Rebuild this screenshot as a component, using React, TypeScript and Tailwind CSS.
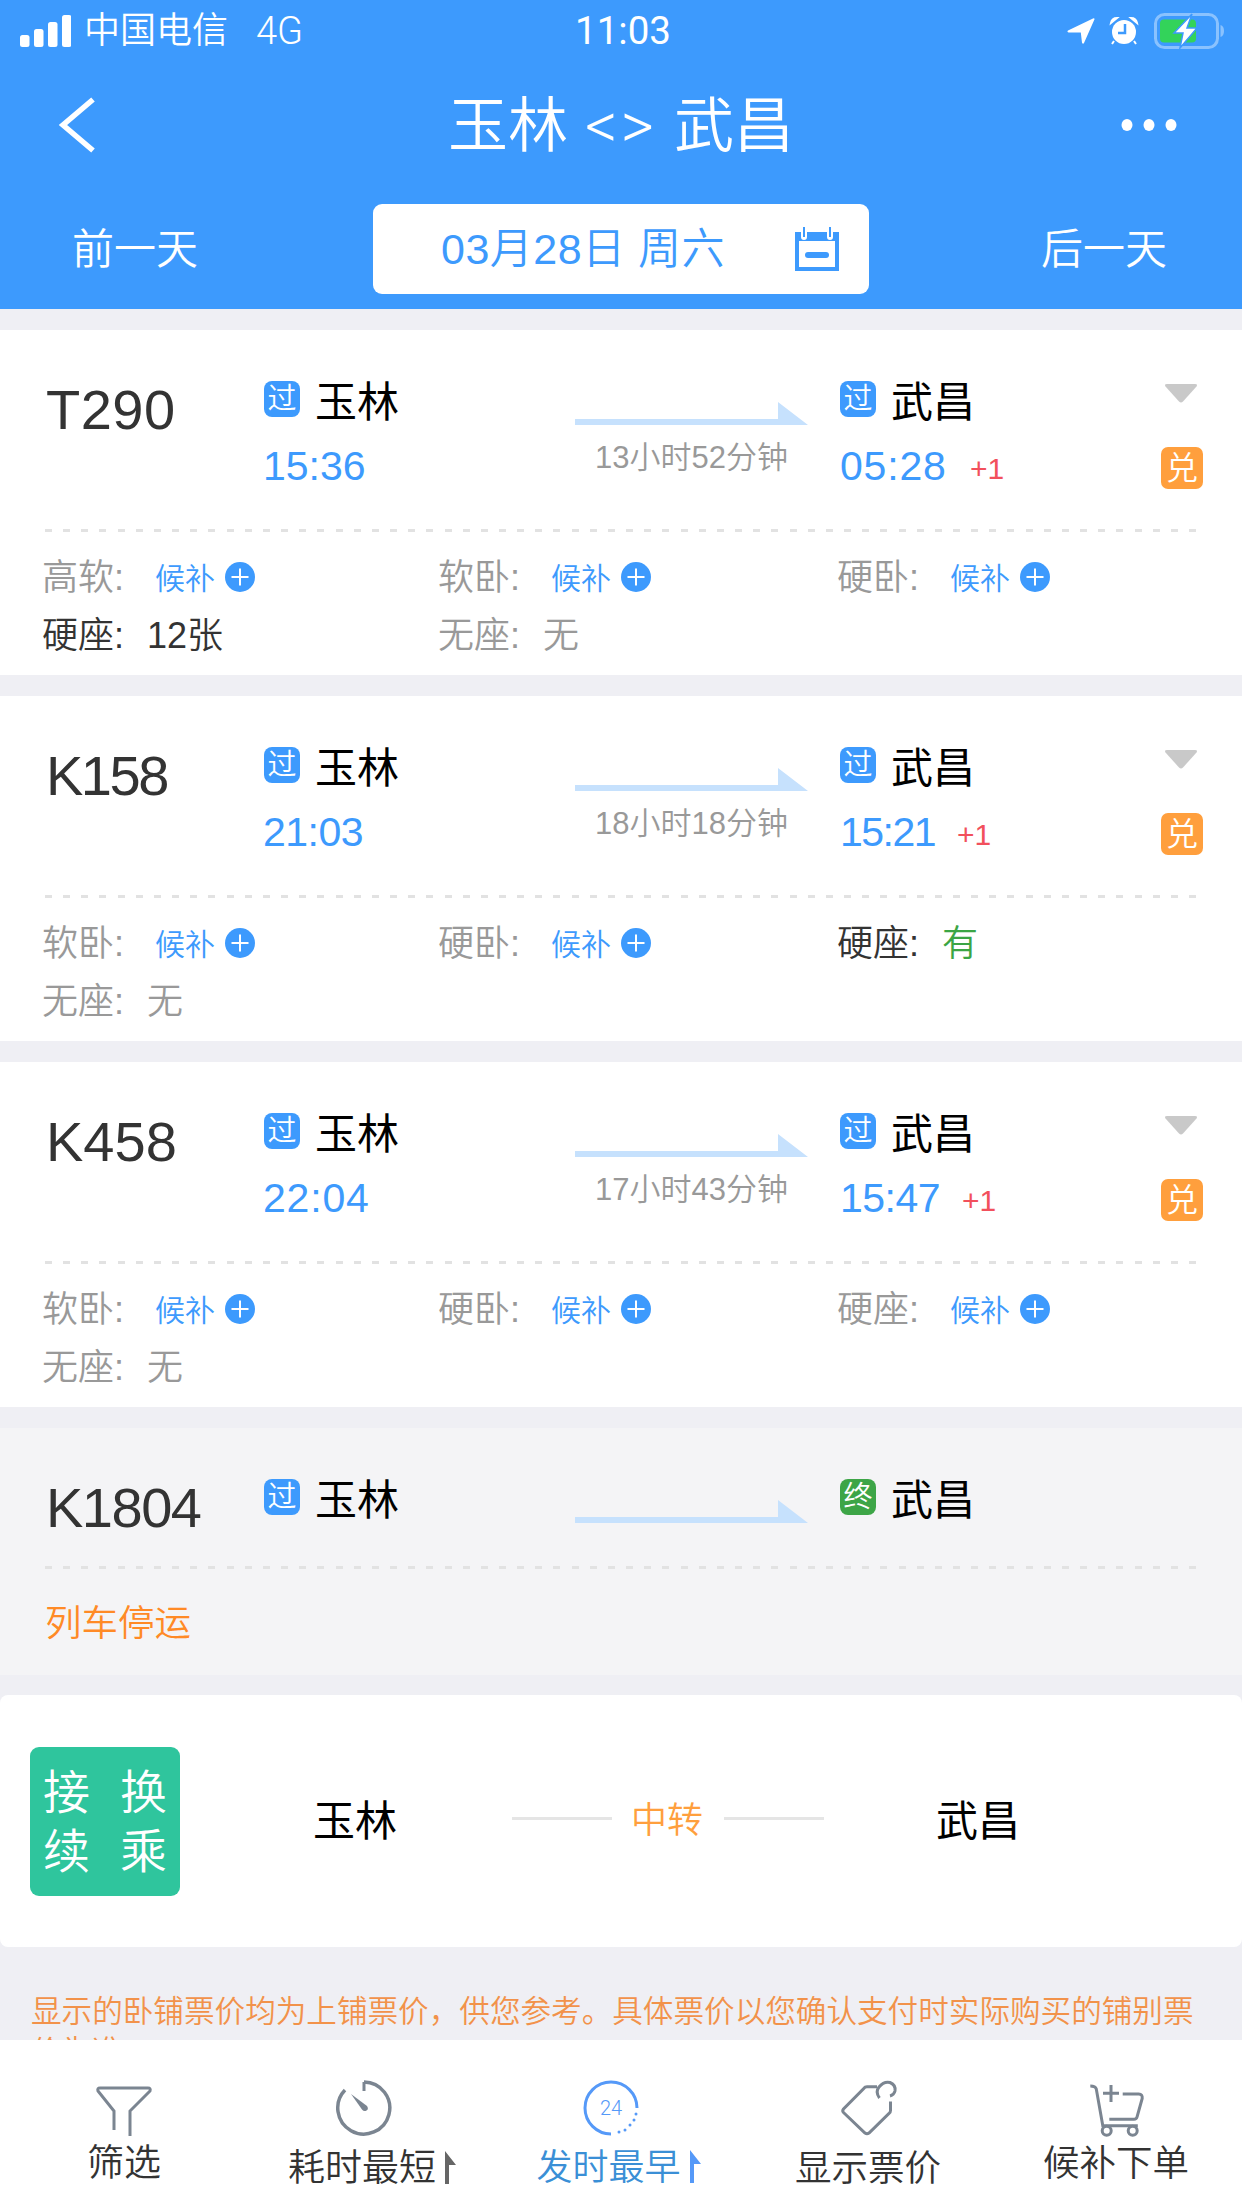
const BLUE = '#3D9AFD'

const trains = [
  {
    no: 'T290', noClass: 'tracking-[0.5px]', from: '过', to: '过', depart: '15:36', departClass: 'tracking-[0px]', arrive: '05:28', arriveClass: 'tracking-[0.8px]', timeBox: 'w-[130px]', dur: '13小时52分钟',
    seats: [
      { label: '高软', wait: true }, { label: '软卧', wait: true }, { label: '硬卧', wait: true },
      { label: '硬座', value: '12张', tone: 'dark' }, { label: '无座', value: '无', tone: 'gray' },
    ],
  },
  {
    no: 'K158', noClass: 'tracking-[-2.500px]', from: '过', to: '过', depart: '21:03', departClass: 'tracking-[-0.5px]', arrive: '15:21', arriveClass: 'tracking-[-1.500px]', timeBox: 'w-[117px]', dur: '18小时18分钟',
    seats: [
      { label: '软卧', wait: true }, { label: '硬卧', wait: true }, { label: '硬座', value: '有', tone: 'green' },
      { label: '无座', value: '无', tone: 'gray' },
    ],
  },
  {
    no: 'K458', noClass: 'tracking-[0px]', from: '过', to: '过', depart: '22:04', departClass: 'tracking-[0.8px]', arrive: '15:47', arriveClass: 'tracking-[-0.5px]', timeBox: 'w-[122px]', dur: '17小时43分钟',
    seats: [
      { label: '软卧', wait: true }, { label: '硬卧', wait: true }, { label: '硬座', wait: true },
      { label: '无座', value: '无', tone: 'gray' },
    ],
  },
]

function StationBadge({ text, green }: { text: string; green?: boolean }) {
  return (
    <span className={`flex h-[36px] w-[36px] shrink-0 items-center justify-center rounded-[8px] text-[29px] leading-none font-[350] text-white ${green ? 'bg-[#3DA547]' : 'bg-[#3D9AFD]'}`}>
      {text}
    </span>
  )
}

function Station({ badge, name, green }: { badge: string; name: string; green?: boolean }) {
  return (
    <div className="flex h-[42px] items-start">
      <StationBadge text={badge} green={green} />
      <span className="mt-[1px] ml-[15px] text-[42px] leading-[42px] text-black">{name}</span>
    </div>
  )
}

function Arrow() {
  return (
    <svg width="233" height="24" viewBox="0 0 233 24" className="block">
      <polygon points="0,17 203,17 203,0 233,23 0,23" fill="#C6E1FD" />
    </svg>
  )
}

function Dashed() {
  return <div className="h-[3px] bg-[repeating-linear-gradient(90deg,#E2E2E2_0,#E2E2E2_7px,transparent_7px,transparent_18.160px)]" />
}

function PlusDot() {
  return (
    <svg width="30" height="30" viewBox="0 0 30 30" className="-mt-[2px] ml-[10px] block">
      <circle cx="15" cy="15" r="15" fill={BLUE} />
      <path d="M15 6.500v17M6.500 15h17" stroke="#fff" strokeWidth="2" />
    </svg>
  )
}

function Seat({ seat }: { seat: { label: string; wait?: boolean; value?: string; tone?: string } }) {
  const dark = seat.tone === 'dark' || seat.tone === 'green'
  return (
    <div className="flex h-[58px] items-center">
      <span className={`w-[105px] text-[36px] font-[350] ${dark ? 'text-[#333333]' : 'text-[#999999]'}`}>{seat.label}:</span>
      {seat.wait ? (
        <>
          <span className="ml-[8px] text-[30px] font-[350] text-[#3D9AFD]">候补</span>
          <PlusDot />
        </>
      ) : (
        <span className={`text-[36px] font-[350] ${seat.tone === 'green' ? 'text-[#3BA544]' : seat.tone === 'gray' ? 'text-[#999999]' : 'text-[#333333]'}`}>
          {seat.value}
        </span>
      )}
    </div>
  )
}

function TrainCard({ train }: { train: (typeof trains)[number] }) {
  return (
    <section className="h-[345px] bg-white">
      <div className="flex h-[199px] pl-[46px]">
        <div className={`w-[218px] pt-[52px] text-[56px] leading-[56px] text-[#333333] ${train.noClass}`}>{train.no}</div>
        <div className="w-[311px] pt-[51px]">
          <Station badge={train.from} name="玉林" />
          <div className={`mt-[19px] -ml-[1px] text-[41px] leading-[48px] text-[#3D9AFD] ${train.departClass}`}>{train.depart}</div>
        </div>
        <div className="w-[233px] pt-[72px]">
          <Arrow />
          <div className="mt-[12px] text-center text-[31px] leading-[40px] font-[350] text-[#999999]">{train.dur}</div>
        </div>
        <div className="ml-[32px] pt-[51px]">
          <Station badge={train.to} name="武昌" />
          <div className="mt-[19px] flex h-[48px] items-center">
            <span className={`${train.timeBox} text-[41px] leading-[48px] text-[#3D9AFD] ${train.arriveClass}`}>{train.arrive}</span>
            <span className="mt-[4px] text-[30px] text-[#F2505C]">+1</span>
          </div>
        </div>
        <div className="mr-[39px] ml-auto flex flex-col items-end pt-[53px]">
          <svg width="34" height="20" viewBox="0 0 34 20" className="mr-[5px] block">
            <path d="M3 1h28q3 0 1.500 2.500L19 18.500q-2 2-4 0L1.500 3.500Q0 1 3 1z" fill="#C9C9C9" />
          </svg>
          <span className="mt-[44px] flex h-[42px] w-[42px] items-center justify-center rounded-[7px] bg-[#FF9F3D] text-[32px] leading-none font-[350] text-white">兑</span>
        </div>
      </div>
      <div className="pr-[45px] pl-[45px]">
        <Dashed />
      </div>
      <div className="grid grid-cols-[396px_399px_1fr] pt-[17px] pl-[42px]">
        {train.seats.map((seat, i) => (
          <Seat key={i} seat={seat} />
        ))}
      </div>
    </section>
  )
}

function StoppedCard() {
  return (
    <section className="h-[247px] bg-[#F4F4F6]">
      <div className="flex h-[138px] pl-[46px]">
        <div className="w-[218px] pt-[52px] text-[56px] leading-[56px] tracking-[-1.500px] text-[#333333]">K1804</div>
        <div className="w-[311px] pt-[51px]">
          <Station badge="过" name="玉林" />
        </div>
        <div className="w-[233px] pt-[72px]">
          <Arrow />
        </div>
        <div className="ml-[32px] pt-[51px]">
          <Station badge="终" name="武昌" green />
        </div>
      </div>
      <div className="pr-[45px] pl-[45px]">
        <Dashed />
      </div>
      <div className="pt-[33px] pl-[45px] text-[36.500px] leading-[44px] font-[350] text-[#FF8A26]">列车停运</div>
    </section>
  )
}

function TransferCard() {
  return (
    <section className="flex h-[252px] items-center rounded-[8px] bg-white pl-[30px]">
      <div className="grid h-[149px] w-[150px] grid-cols-[77px_77px] content-center justify-center justify-items-center gap-y-[12px] rounded-[9px] bg-[#2FC59D] pt-[2px] text-[47px] leading-[47px] font-[350] text-white">
        <span>接</span>
        <span>换</span>
        <span>续</span>
        <span>乘</span>
      </div>
      <span className="ml-[133px] text-[42px] text-black">玉林</span>
      <div className="mb-[5px] ml-[115px] h-[3px] w-[100px] bg-[#E5E5E5]" />
      <span className="ml-[19px] text-[36px] font-[350] text-[#FF9F3D]">中转</span>
      <div className="mb-[5px] ml-[21px] h-[3px] w-[100px] bg-[#E5E5E5]" />
      <span className="ml-[112px] text-[42px] text-black">武昌</span>
    </section>
  )
}

function StatusBar() {
  return (
    <div className="flex h-[62px] items-center text-white">
      <div className="flex flex-1 items-center pl-[20px]">
        <svg width="51" height="32" viewBox="0 0 51 32" className="block">
          <rect x="0" y="20" width="9.500" height="12" rx="2.500" fill="#fff" />
          <rect x="14" y="14" width="9.500" height="18" rx="2.500" fill="#fff" />
          <rect x="28" y="7" width="9.500" height="25" rx="2.500" fill="#fff" />
          <rect x="42" y="0" width="9.500" height="32" rx="2.500" fill="#fff" />
        </svg>
        <span className="ml-[13px] text-[36px] leading-none font-[350]">中国电信</span>
        <span className="ml-[28px] font-['Roboto'] text-[38px] leading-none font-light">4G</span>
      </div>
      <span className="font-['Roboto'] text-[38.500px] leading-none">11:03</span>
      <div className="flex flex-1 items-center justify-end pr-[16px]">
        <svg width="28" height="28" viewBox="0 0 28 28" className="block">
          <path d="M1 13.500 26 1.500q2-.8 1.300 1.300L17 26q-1 1.500-2-.2l-1.200-10.300L1.500 15.500q-1.800-.8-.5-2z" fill="#fff" />
        </svg>
        <svg width="30" height="30" viewBox="0 0 30 30" className="ml-[14px] block">
          <path d="M2 7q1-5 6-5zM28 7q-1-5-6-5zM5 25l-2 3M25 25l2 3" fill="#fff" stroke="#fff" strokeWidth="2" />
          <circle cx="15" cy="16" r="12" fill="#fff" />
          <path d="M16 8v9H9" fill="none" stroke={BLUE} strokeWidth="2.500" />
        </svg>
        <svg width="72" height="36" viewBox="0 0 72 36" className="ml-[15px] block">
          <rect x="1.500" y="1.500" width="62" height="33" rx="9" fill="none" stroke="#fff" strokeOpacity="0.4" strokeWidth="3" />
          <rect x="6" y="6.500" width="36" height="23" rx="4" fill="#33D35A" />
          <path d="M66.500 12q3.500 1 3.500 6t-3.500 6z" fill="#fff" fillOpacity="0.4" />
          <polygon points="38,1 20,20 29,20 26,35 43,15 33,15" fill="#fff" stroke={BLUE} strokeWidth="1.500" />
        </svg>
      </div>
    </div>
  )
}

function Header() {
  return (
    <header className="h-[309px] bg-[#3D9AFD] text-white">
      <StatusBar />
      <div className="grid h-[126px] grid-cols-[1fr_auto_1fr] items-center">
        <svg width="38" height="56" viewBox="0 0 38 56" className="ml-[58px] block">
          <path d="M35 2.500 5 28l30 25.500" fill="none" stroke="#fff" strokeWidth="5.500" />
        </svg>
        <h1 className="mt-[4px] flex items-center gap-[17px] text-[60px] leading-none font-[350]">
          <span>玉林</span>
          <span className="font-['Roboto'] text-[64px] font-light tracking-[3px]">&lt;&gt;</span>
          <span>武昌</span>
        </h1>
        <svg width="56" height="12" viewBox="0 0 56 12" className="mr-[65px] block justify-self-end">
          <ellipse cx="6" cy="6" rx="5.500" ry="6" fill="#fff" />
          <ellipse cx="28" cy="6" rx="5.500" ry="6" fill="#fff" />
          <ellipse cx="50" cy="6" rx="5.500" ry="6" fill="#fff" />
        </svg>
      </div>
      <div className="flex items-center pt-[16px]">
        <div className="w-[373px] pl-[72px] text-[42px] font-[350]">前一天</div>
        <div className="flex h-[90px] w-[496px] items-center rounded-[9px] bg-white pl-[68px] text-[#3D9AFD]">
          <span className="w-[353px] text-[43px] font-[350] tracking-[0.5px]">03月28日 周六</span>
          <svg width="46" height="46" viewBox="0 0 46 46" className="block">
            <path d="M1 6h6v5a3 3 0 0 0 6 0V6h20v5a3 3 0 0 0 6 0V6h6v39H1z" fill={BLUE} />
            <rect x="5" y="15" width="36" height="26" fill="#fff" />
            <rect x="11" y="26" width="24" height="6" rx="3" fill={BLUE} />
            <path d="M10 1v10M36 1v10" stroke={BLUE} strokeWidth="2" />
          </svg>
        </div>
        <div className="pl-[172px] text-[42px] font-[350]">后一天</div>
      </div>
    </header>
  )
}

function SortArrow({ active }: { active?: boolean }) {
  return (
    <svg width="11" height="33" viewBox="0 0 11 33" className="absolute top-[2px] left-[calc(100%+9px)] block">
      <path d="M0 0 11 14H4V33H0z" fill={active ? '#5599F8' : '#666666'} />
    </svg>
  )
}

function BottomBar() {
  const stroke = '#7B8591'
  return (
    <nav className="flex h-[168px] bg-white">
      <div className="flex w-[248px] flex-col items-center">
        <svg width="60" height="60" viewBox="0 0 60 60" className="mt-[40px] block">
          <path d="M20 50V31L4 11q-1-3 2-3h48q3 0 2 3L36 31v25" fill="none" stroke={stroke} strokeWidth="3" />
        </svg>
        <span className="mt-[2px] text-[37px] leading-[44px] font-[350] text-[#333333]">筛选</span>
      </div>
      <div className="flex w-[228px] flex-col items-center">
        <svg width="60" height="60" viewBox="0 0 60 60" className="mt-[38px] ml-[3px] block">
          <path d="M30 4a26 26 0 1 1-19 8" fill="none" stroke={stroke} strokeWidth="3.500" />
          <path d="M30 4v9" stroke={stroke} strokeWidth="3" />
          <path d="M17 16 33 28q2 3-.5 4.500t-4.500-1z" fill={stroke} />
        </svg>
        <span className="relative mt-[11px] text-[37px] leading-[40px] font-[350] text-[#333333]">
          耗时最短
          <SortArrow />
        </span>
      </div>
      <div className="flex w-[270px] flex-col items-center">
        <svg width="60" height="60" viewBox="0 0 60 60" className="mt-[38px] block">
          <path d="M56 30A26 26 0 1 0 30 56" fill="none" stroke="#5599F8" strokeWidth="3" />
          <circle cx="55" cy="36" r="1.500" fill="#5599F8" />
          <circle cx="53" cy="42" r="1.500" fill="#5599F8" />
          <circle cx="49" cy="47" r="1.500" fill="#5599F8" />
          <circle cx="44" cy="52" r="1.500" fill="#5599F8" />
          <circle cx="38" cy="54" r="1.500" fill="#5599F8" />
          <text x="30" y="37" textAnchor="middle" fontSize="20" fontFamily="Roboto" fontWeight="300" fill="#5599F8">24</text>
        </svg>
        <span className="relative mt-[10px] mr-[5px] text-[36px] leading-[40px] font-[350] text-[#3A8FD6]">
          发时最早
          <SortArrow active />
        </span>
      </div>
      <div className="flex w-[244px] flex-col items-center">
        <svg width="60" height="60" viewBox="0 0 60 60" className="mt-[38px] block">
          <path d="M39 8.700H29q-2 0-3 1.500L5.500 31q-1.500 2 0 3.500L27 55q2 1.500 4 0L51 35.500q1.500-1 1.500-3V23.500" fill="none" stroke={stroke} strokeWidth="3" />
          <path d="M41.500 20Q37 14 41 9 46 3 52 4.500 58 7 57 13 56 17 52 18" fill="none" stroke={stroke} strokeWidth="3" />
        </svg>
        <span className="mt-[11px] text-[36.500px] leading-[40px] font-[350] text-[#333333]">显示票价</span>
      </div>
      <div className="flex w-[252px] flex-col items-center">
        <svg width="60" height="60" viewBox="0 0 60 60" className="mt-[39px] block">
          <path d="M4.300 7q5 0 6 3l6.500 36.700h35" fill="none" stroke={stroke} strokeWidth="3" />
          <path d="M36.700 15h16q4 0 3.500 4.500L51 38q-.5 2.300-3 2.300H23.300M25 6v17M17 14.300h16" fill="none" stroke={stroke} strokeWidth="3" />
          <circle cx="20.700" cy="51.700" r="4.500" fill="#fff" stroke={stroke} strokeWidth="3" />
          <circle cx="46.700" cy="51.700" r="4.500" fill="#fff" stroke={stroke} strokeWidth="3" />
        </svg>
        <span className="mt-[3px] text-[36.500px] leading-[44px] font-[350] text-[#333333]">候补下单</span>
      </div>
    </nav>
  )
}

export default function App() {
  return (
    <div className="flex h-[2208px] w-[1242px] flex-col overflow-hidden bg-[#EFEFF4] font-['Liberation_Sans','Noto_Sans_CJK_SC',sans-serif]">
      <Header />
      <main className="min-h-0 flex-1 overflow-hidden pt-[21px]">
        <div className="flex flex-col gap-[21px]">
          {trains.map((train) => (
            <TrainCard key={train.no} train={train} />
          ))}
          <StoppedCard />
        </div>
        <div className="mt-[20px]">
          <TransferCard />
        </div>
        <p className="mt-[44px] pr-[36px] pl-[31px] text-[30.600px] leading-[40px] font-[350] text-[#F2924A]">
          显示的卧铺票价均为上铺票价，供您参考。具体票价以您确认支付时实际购买的铺别票价为准。
        </p>
      </main>
      <BottomBar />
    </div>
  )
}
